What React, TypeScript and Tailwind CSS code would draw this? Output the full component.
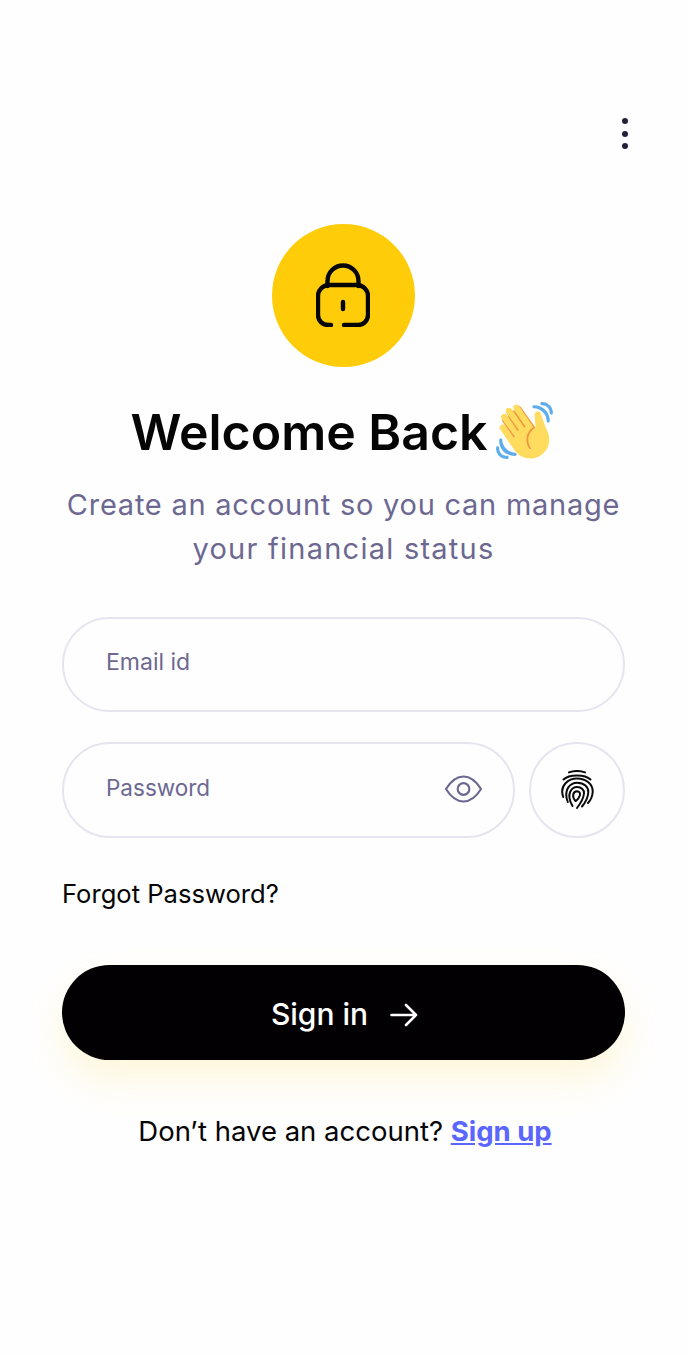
import React from "react";

const font = { fontFamily: '"Inter", "Liberation Sans", sans-serif' };

function Wave() {
  return (
    <svg viewBox="0 0 36 36" className="w-[57px] h-[57px] shrink-0 ml-[8px] mb-[4px]">
      <path fill="#EF9645" d="M4.861 9.147c.94-.657 2.357-.531 3.201.166l-.968-1.407c-.779-1.111-.5-2.313.612-3.093 1.112-.777 4.263 1.312 4.263 1.312-.786-1.122-.639-2.544.483-3.331 1.122-.784 2.67-.513 3.456.611l10.42 14.72L25 31l-11.083-4.042L4.25 12.625c-.793-1.129-.519-2.686.611-3.478z" />
      <path fill="#FFDC5D" d="M2.695 17.336s-1.132-1.65.519-2.781c1.649-1.131 2.78.518 2.78.518l5.251 7.658c.181-.302.379-.6.6-.894L3.557 10.53s-1.131-1.649.519-2.78c1.65-1.131 2.78.518 2.78.518l6.855 9.997c.255-.208.516-.417.785-.622L6.549 6.732s-1.131-1.649.519-2.78c1.649-1.131 2.78.518 2.78.518l7.947 11.589c.292-.179.581-.334.871-.498L11.238 4.729s-1.131-1.649.518-2.78c1.649-1.131 2.78.518 2.78.518l7.854 11.454 1.194 1.742c-4.948 3.394-5.419 9.779-2.592 13.902.565.825 1.39.26 1.39.26-3.393-4.949-2.357-10.51 2.592-13.903L24.515 8.62s-.545-1.924 1.378-2.47c1.924-.545 2.47 1.379 2.47 1.379l1.685 5.004c.668 1.984 1.379 3.961 2.32 5.831 2.657 5.28 1.07 11.842-3.94 15.279-5.465 3.747-12.936 2.354-16.684-3.11L2.695 17.336z" />
      <path fill="#5DADEC" d="M12 32.042C8 32.042 3.958 28 3.958 24c0-.553-.405-1-.958-1s-1.042.447-1.042 1C1.958 30 6 34.042 12 34.042c.553 0 1-.489 1-1.042s-.447-.958-1-.958z" />
      <path fill="#5DADEC" d="M7 34c-3 0-5-2-5-5 0-.553-.447-1-1-1s-1 .447-1 1c0 4 3 7 7 7 .553 0 1-.447 1-1s-.447-1-1-1zM24 2c-.552 0-1 .448-1 1s.448 1 1 1c4 0 8 3.589 8 8 0 .552.448 1 1 1s1-.448 1-1c0-5.514-4-10-10-10z" />
      <path fill="#5DADEC" d="M29 .042c-.552 0-1 .406-1 .958s.448 1.042 1 1.042c3 0 4.958 2.225 4.958 4.958 0 .552.489 1 1.042 1s.958-.448.958-1C35.958 3.163 33 .042 29 .042z" />
    </svg>
  );
}

function Lock() {
  return (
    <svg viewBox="0 0 54 64" className="w-[54px] h-[64px] mb-[2px] mr-[2px]" fill="none" stroke="#050505" strokeWidth="4.4" strokeLinecap="round" strokeLinejoin="round">
      <path d="M11.5 23V18A15.5 15.5 0 0 1 42.5 18V23" />
      <path d="M15 62H12A10 10 0 0 1 2 52V33A11 11 0 0 1 13 22H41A11 11 0 0 1 52 33V52A10 10 0 0 1 42 62H28" />
      <path d="M27 39V46" />
    </svg>
  );
}

function Eye() {
  return (
    <svg viewBox="0 0 38 28" className="w-[37px] h-[28px] mb-[2px] shrink-0" fill="none" stroke="#6C6891" strokeWidth="2.2" strokeLinejoin="round">
      <path d="M1 14C6 6 12 1.2 19 1.2S32 6 37 14C32 22 26 26.8 19 26.8S6 22 1 14Z" />
      <circle cx="19" cy="14" r="6" />
    </svg>
  );
}

function Finger() {
  return (
    <svg viewBox="0 0 34 40" className="w-[34px] h-[40px]" fill="none" stroke="#0a0a0a" strokeWidth="2" strokeLinecap="round">
      <path d="M9 2.4C13.5 .8 20.5 .8 25 2.4" />
      <path d="M3.5 9.5C9 4 25 4 30.5 9.5" />
      <path d="M3.2 27C-1 15 9 8.5 17 8.5C26 8.5 33 14 32.7 22C32.5 25.5 30.8 30 28 33" />
      <path d="M7.8 32C3 20 10 12.8 17.2 12.8C24 12.8 28.7 17 28.3 22.5C28 26.5 25.8 32 22 36.5" />
      <path d="M12.5 36C5.5 24 11.5 17 17.2 17C21.5 17 24.4 20 24 23.5C23.5 28 20.5 33.5 17 38" />
      <path d="M15.5 31C11.5 26.5 13 21.5 17 21.3C19.6 21.3 20.5 23.2 19.8 25.5C19.2 27.5 17.7 29.5 16.2 30.8" />
    </svg>
  );
}

export default function App() {
  return (
    <div className="w-[687px] h-[1355px] bg-[#fefefe] flex flex-col" style={font}>
      <div className="flex justify-end pt-[118px] pr-[59px]">
        <div className="flex flex-col gap-[6.5px]">
          <span className="block w-[6px] h-[6px] rounded-full bg-[#22213a]" />
          <span className="block w-[6px] h-[6px] rounded-full bg-[#22213a]" />
          <span className="block w-[6px] h-[6px] rounded-full bg-[#22213a]" />
        </div>
      </div>
      <div className="flex justify-center mt-[75px]">
        <div className="w-[143px] h-[143px] rounded-full bg-[#ffcc0a] flex items-center justify-center">
          <Lock />
        </div>
      </div>
      <div className="flex items-center justify-center mt-[32px] h-[66px] pr-[4px] text-[#050505]">
        <h1 className="text-[50px] font-semibold leading-[66px]">Welcome Back</h1>
        <Wave />
      </div>
      <p className="mt-[18px] text-center text-[29px] leading-[44px] tracking-[0.75px] text-[#6c6891]">
        Create an account so you can manage
        <br />
        <span className="tracking-[1.25px]">your financial status</span>
      </p>
      <div className="mx-[62px] mt-[46px] flex flex-col">
        <div className="h-[95px] rounded-full border-2 border-[#e6e5ef] flex items-center pl-[42px] pr-[43px]">
          <input placeholder="Email id" className="w-full mb-[4px] outline-none bg-transparent text-[23px] placeholder:text-[#6c6891]" />
        </div>
        <div className="flex gap-[14px] mt-[30px]">
          <div className="flex-1 h-[96px] rounded-full border-2 border-[#e6e5ef] flex items-center pl-[42px] pr-[31px]">
            <input placeholder="Password" className="w-full mb-[4px] outline-none bg-transparent text-[22.5px] placeholder:text-[#6c6891]" />
            <Eye />
          </div>
          <div className="w-[96px] h-[96px] rounded-full border-2 border-[#e6e5ef] flex items-center justify-center">
            <Finger />
          </div>
        </div>
        <a className="mt-[38px] text-[25.6px] leading-[36px] text-[#050505]">Forgot Password?</a>
        <button className="mt-[53px] h-[95px] pt-[4px] pl-[2px] rounded-full bg-[#020002] text-white flex items-center justify-center gap-[22px] text-[30px] font-medium shadow-[0_20px_40px_rgba(255,204,10,0.14)]">
          <span>Sign in</span>
          <svg viewBox="0 0 28 24" className="w-[28px] h-[24px]" fill="none" stroke="#fff" strokeWidth="2.6" strokeLinecap="round" strokeLinejoin="round">
            <path d="M1.5 12H26M16 2L26 12L16 22" />
          </svg>
        </button>
        <p className="mt-[52px] pl-[3px] text-center text-[27.5px] leading-[38px] text-[#050505]">
          Don’t have an account? <a className="font-bold text-[#5a66ff] underline">Sign up</a>
        </p>
      </div>
    </div>
  );
}
